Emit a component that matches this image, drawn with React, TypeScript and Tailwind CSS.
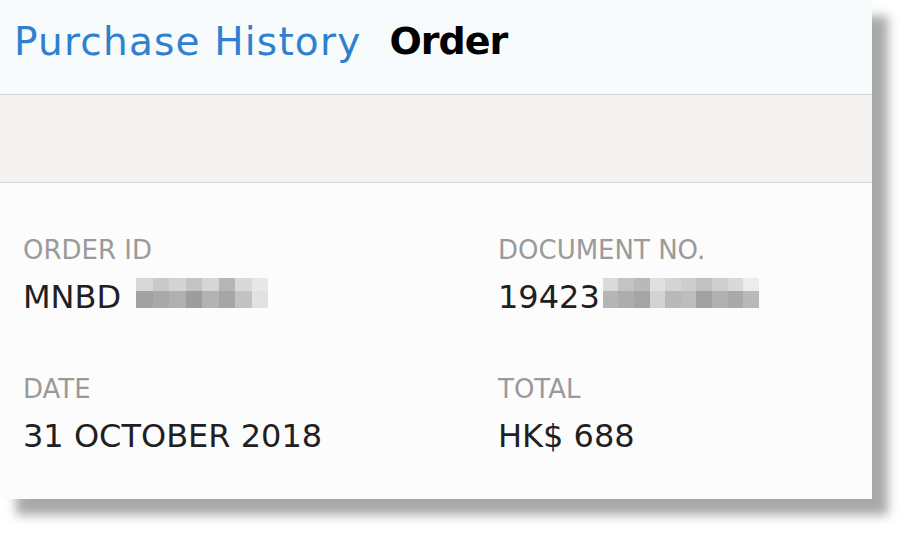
const orderBlur = {
  top: ['#d8d8d8', '#c9c9c9', '#d3d3d3', '#c4c4c4', '#d6d6d6', '#b6b6b6', '#d9d9d9', '#e8e8e8'],
  bottom: ['#a2a2a2', '#a9a9a9', '#b0b0b0', '#9d9d9d', '#b3b3b3', '#a6a6a6', '#c2c2c2', '#e2e2e2'],
};

const docBlur = {
  top: ['#dadada', '#c3c3c3', '#b9b9b9', '#e0e0e0', '#d4d4d4', '#cdcdcd', '#c1c1c1', '#cfcfcf', '#d9d9d9', '#ececec'],
  bottom: ['#b5b5b5', '#adadad', '#a5a5a5', '#d3d3d3', '#b9b9b9', '#bdbdbd', '#a1a1a1', '#b1b1b1', '#a9a9a9', '#b9b9b9'],
};

function Pixelated({ rows, cell }: { rows: { top: string[]; bottom: string[] }; cell: number }) {
  return (
    <div className="flex flex-col -mt-[3px]">
      {[rows.top, rows.bottom].map((row, r) => (
        <div key={r} className={r === 0 ? 'flex h-[13px]' : 'flex h-[17px]'}>
          {row.map((c, i) => (
            <div key={i} style={{ background: c, width: cell }} />
          ))}
        </div>
      ))}
    </div>
  );
}

function Field({ label, children }: { label: string; children: React.ReactNode }) {
  return (
    <div className="flex flex-col gap-[18px]">
      <div className="text-[26px] leading-none text-[#9a9a9a]">{label}</div>
      <div className="flex items-start text-[32px] leading-none text-[#1e2022]">{children}</div>
    </div>
  );
}

export default function App() {
  return (
    <div className="w-[914px] h-[540px] bg-white" style={{ fontFamily: '"DejaVu Sans", sans-serif' }}>
      <div className="w-[872px] h-[499px] bg-[#fcfcfc] shadow-[16px_16px_10px_rgba(0,0,0,0.34)] flex flex-col">
        <div className="h-[95px] bg-[#f7fbfb] border-b border-[#d0d4d8] flex items-start gap-[28px] pl-[14px] pt-[22px]">
          <span className="text-[39px] leading-none text-[#2f80d1] tracking-[1.2px]">Purchase History</span>
          <span className="text-[38px] leading-none font-bold text-black tracking-[-1px]">Order</span>
        </div>
        <div className="h-[88px] bg-[#f4f3f1] border-b border-[#cfd3d6]" />
        <div className="flex-1 grid grid-cols-[475px_1fr] gap-y-[63px] content-start pl-[23px] pt-[54px]">
          <Field label="ORDER ID">
            <span>MNBD</span>
            <div className="ml-[15px]">
              <Pixelated rows={orderBlur} cell={16.5} />
            </div>
          </Field>
          <Field label="DOCUMENT NO.">
            <span>19423</span>
            <div className="ml-[3px]">
              <Pixelated rows={docBlur} cell={15.6} />
            </div>
          </Field>
          <Field label="DATE">
            <span>31 OCTOBER 2018</span>
          </Field>
          <Field label="TOTAL">
            <span>HK$ 688</span>
          </Field>
        </div>
      </div>
    </div>
  );
}
